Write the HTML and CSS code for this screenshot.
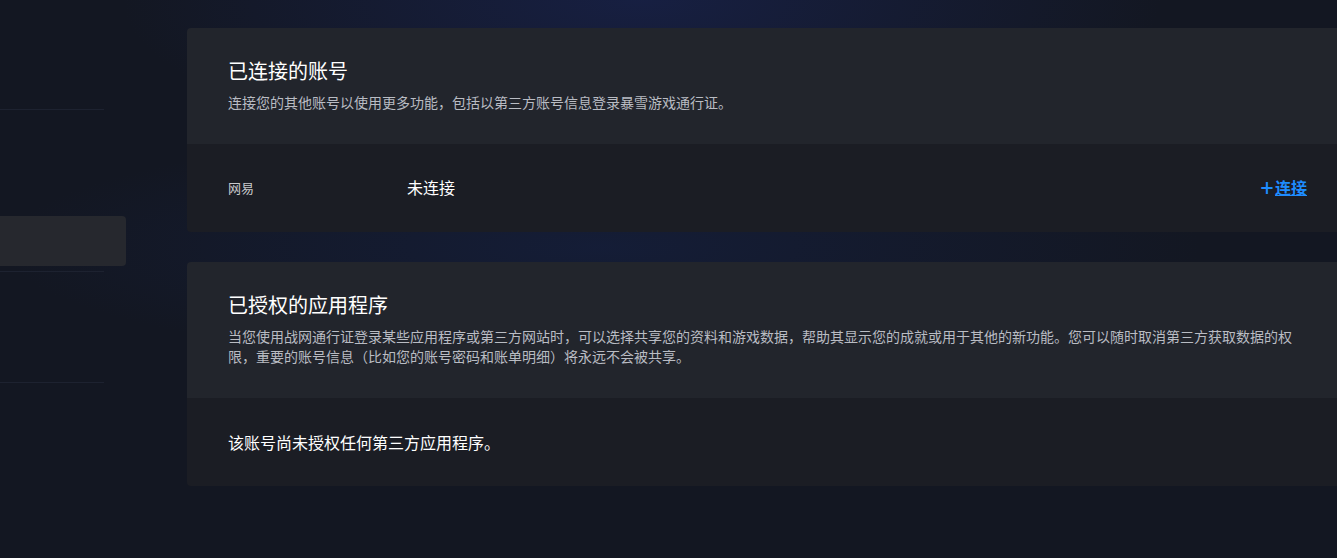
FILE: index.html
```html
<!DOCTYPE html>
<html lang="zh-CN">
<head>
  <meta charset="UTF-8">
  <title>已连接的账号</title>
  <link rel="stylesheet" href="styles.css">
</head>
<body>
<div class="page">
  <aside class="sideNav">
    <div class="navLine"></div>
    <div class="navBlock"></div>
    <div class="navItem active"></div>
    <div class="navLine"></div>
    <div class="navBlock tall"></div>
    <div class="navLine"></div>
  </aside>

  <main class="content">
    <section class="card">
      <div class="cardHead">
        <h2>已连接的账号</h2>
        <p>连接您的其他账号以使用更多功能，包括以第三方账号信息登录暴雪游戏通行证。</p>
      </div>
      <div class="cardBody row">
        <span class="rowLabel">网易</span>
        <span class="rowStatus">未连接</span>
        <a class="connectLink" href="#"><b>＋</b><u>连接</u></a>
      </div>
    </section>

    <section class="card">
      <div class="cardHead">
        <h2>已授权的应用程序</h2>
        <p>当您使用战网通行证登录某些应用程序或第三方网站时，可以选择共享您的资料和游戏数据，帮助其显示您的成就或用于其他的新功能。您可以随时取消第三方获取数据的权限，重要的账号信息（比如您的账号密码和账单明细）将永远不会被共享。</p>
      </div>
      <div class="cardBody">
        <span class="emptyText">该账号尚未授权任何第三方应用程序。</span>
      </div>
    </section>
  </main>
</div>
</body>
</html>
```

FILE: styles.css
```css
/*基础样式*/
html, body {
  margin: 0;
  height: 100%;
}
body {
  font-family: "Noto Sans CJK SC", "Liberation Sans", sans-serif;
  color: #fff;
  background-color: #131722;
  background-image:
    radial-gradient(ellipse 520px 160px at 48% 0, rgba(26, 38, 92, .55), transparent),
    radial-gradient(ellipse 600px 120px at 45% 247px, rgba(22, 36, 80, .45), transparent);
  background-repeat: no-repeat;
  overflow: hidden;
}
h2, p {
  margin: 0;
  font-weight: normal;
}

.page {
  display: flex;
  gap: 61px;
  padding-top: 28px;
}

/*左侧导航*/
.sideNav {
  width: 126px;
  flex: none;
  display: flex;
  flex-direction: column;
  margin-top: -28px;
  padding-top: 109px;
}
.navLine {
  width: 104px;
  height: 1px;
  background-color: #1d2230;
}
.navBlock {
  height: 106px;
}
.navBlock.tall {
  height: 110px;
}
.navItem {
  height: 50px;
  margin-bottom: 5px;
}
.navItem.active {
  background-color: #26282e;
  border-radius: 0 4px 4px 0;
}

/*右侧内容*/
.content {
  flex: 1;
  display: flex;
  flex-direction: column;
  gap: 30px;
}
.card {
  border-radius: 4px 0 0 4px;
  overflow: hidden;
}
.cardHead {
  background-color: #22252c;
  padding: 29px 32px 32px 41px;
}
.cardHead h2 {
  font-size: 20px;
  line-height: 28px;
  color: #fff;
}
.cardHead p {
  margin-top: 7px;
  font-size: 14px;
  line-height: 20px;
  color: #b9bcc3;
}
.cardBody {
  background-color: #1b1d24;
  height: 88px;
  padding: 0 30px 0 41px;
  display: flex;
  align-items: center;
}
.row {
  padding-bottom: 2px;
  height: 86px;
}

.rowLabel {
  width: 179px;
  font-size: 13px;
  color: #c8c9cc;
}
.rowStatus {
  font-size: 16px;
  color: #fff;
}
.connectLink {
  margin-left: auto;
  font-size: 16px;
  font-weight: bold;
  color: #1e8cff;
  text-decoration: none;
}
.emptyText {
  font-size: 16px;
  color: #fff;
}
```
